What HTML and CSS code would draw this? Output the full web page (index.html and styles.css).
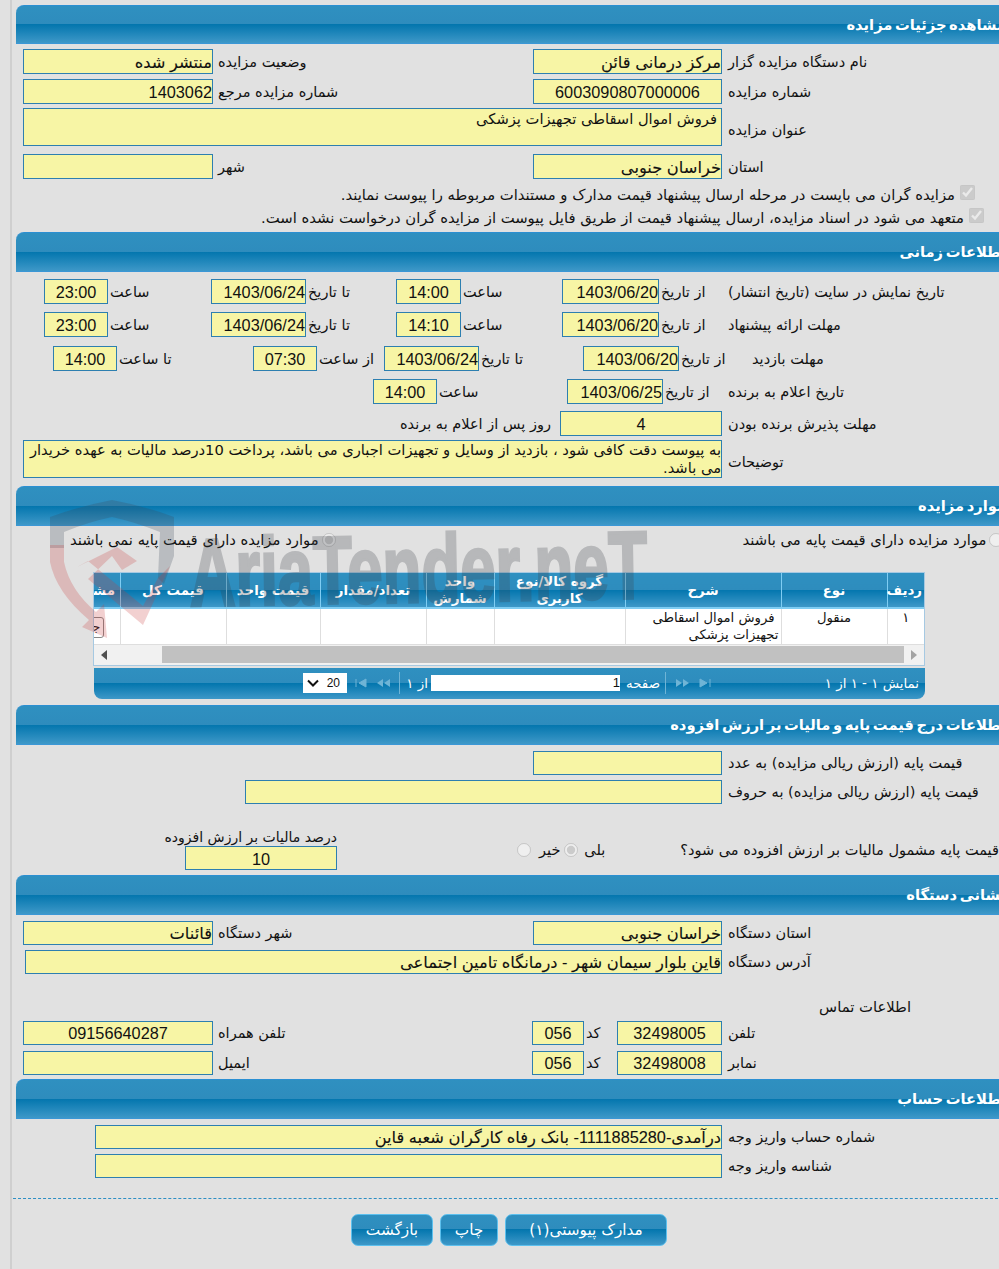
FILE: index.html
```html
<!DOCTYPE html>
<html lang="fa">
<head>
<meta charset="utf-8">
<title>مشاهده جزئیات مزایده</title>
<link rel="stylesheet" href="styles.css">
</head>
<body>
<div class="page">
  <div class="wrap">

    <h2 class="hd first">مشاهده جزئیات مزایده</h2>
    <div class="row c-main h25 mt5 low">
      <div class="in big ra">منتشر شده</div><div class="lb">وضعیت مزایده</div>
      <div class="in big ra">مرکز درمانی قائن</div><div class="lb">نام دستگاه مزایده گزار</div>
    </div>
    <div class="row c-main h24 mt5 low">
      <div class="in ra">1403062</div><div class="lb">شماره مزایده مرجع</div>
      <div class="in ce">6003090807000006</div><div class="lb">شماره مزایده</div>
    </div>
    <div class="row c-wide h38 mt5">
      <div class="in area">فروش اموال اسقاطی تجهیزات پزشکی</div><div class="lb">عنوان مزایده</div>
    </div>
    <div class="row c-main h25 mt8 low">
      <div class="in"></div><div class="lb">شهر</div>
      <div class="in big ra">خراسان جنوبی</div><div class="lb">استان</div>
    </div>
    <label class="chk mt4"><input type="checkbox" checked disabled><span>مزایده گران می بایست در مرحله ارسال پیشنهاد قیمت مدارک و مستندات مربوطه را پیوست نمایند.</span></label>
    <label class="chk"><input type="checkbox" checked disabled><span>متعهد می شود در اسناد مزایده، ارسال پیشنهاد قیمت از طریق فایل پیوست از مزایده گران درخواست نشده است.</span></label>

    <h2 class="hd mt3">اطلاعات زمانی</h2>
    <div class="row c-time h24 mt7 low">
      <div class="in ce">23:00</div><div class="lb s">ساعت</div>
      <div class="in ra">1403/06/24</div><div class="lb s">تا تاریخ</div>
      <div class="in ce">14:00</div><div class="lb s">ساعت</div>
      <div class="in ra">1403/06/20</div><div class="lb s">از تاریخ</div>
      <div class="lb">تاریخ نمایش در سایت (تاریخ انتشار)</div>
    </div>
    <div class="row c-time h25 mt9 low">
      <div class="in ce">23:00</div><div class="lb s">ساعت</div>
      <div class="in ra">1403/06/24</div><div class="lb s">تا تاریخ</div>
      <div class="in ce">14:10</div><div class="lb s">ساعت</div>
      <div class="in ra">1403/06/20</div><div class="lb s">از تاریخ</div>
      <div class="lb">مهلت ارائه پیشنهاد</div>
    </div>
    <div class="row c-visit h24 mt9 low">
      <div class="in ce">14:00</div><div class="lb s">تا ساعت</div>
      <div class="in ce">07:30</div><div class="lb s">از ساعت</div>
      <div class="in ra">1403/06/24</div><div class="lb s">تا تاریخ</div>
      <div class="in ra">1403/06/20</div><div class="lb s">از تاریخ</div>
      <div class="lb">مهلت بازدید</div>
    </div>
    <div class="row c-ann h25 mt9 low">
      <div class="in ce">14:00</div><div class="lb s">ساعت</div>
      <div class="in ra">1403/06/25</div><div class="lb s">از تاریخ</div>
      <div class="lb">تاریخ اعلام به برنده</div>
    </div>
    <div class="row c-days h24 mt7 low">
      <div class="lb end">روز پس از اعلام به برنده</div>
      <div class="in ce">4</div><div class="lb">مهلت پذیرش برنده بودن</div>
    </div>
    <div class="row c-wide h38 mt5">
      <div class="in area tight">به پیوست دقت کافی شود ، بازدید از وسایل و تجهیزات اجباری می باشد، پرداخت 10درصد مالیات به عهده خریدار می باشد.</div><div class="lb">توضیحات</div>
    </div>

    <h2 class="hd mt8">موارد مزایده</h2>
    <div class="radios">
      <label class="rad r-off"><span>موارد مزایده دارای قیمت پایه نمی باشند</span><input type="radio" name="base" checked disabled></label>
      <label class="rad r-on"><span>موارد مزایده دارای قیمت پایه می باشند</span><input type="radio" name="base" disabled></label>
    </div>

    <div class="grid">
      <div class="scroller">
        <table>
          <thead>
            <tr>
              <th class="w1">ردیف</th><th class="w2">نوع</th><th class="w3">شرح</th><th class="w4">گروه کالا/نوع کاربری</th>
              <th class="w5">واحد شمارش</th><th class="w6">تعداد/مقدار</th><th class="w7">قیمت واحد</th><th class="w8">قیمت کل</th><th class="w9">مشاهده</th>
            </tr>
          </thead>
          <tbody>
            <tr>
              <td class="ctr">۱</td><td class="ctr">منقول</td><td><span class="ind">فروش اموال اسقاطی</span><br>تجهیزات پزشکی</td><td></td><td></td><td></td><td></td><td></td>
              <td><span class="mini">جزئیات</span></td>
            </tr>
          </tbody>
        </table>
      </div>
      <div class="sbar">
        <span class="sb-arrow"><svg width="6" height="10" viewBox="0 0 6 10"><path d="M6 0v10L0 5z" fill="#505050"/></svg></span>
        <span class="sb-thumb"></span>
        <span class="sb-arrow"><svg width="6" height="10" viewBox="0 0 6 10"><path d="M0 0v10l6-5z" fill="#a3a3a3"/></svg></span>
      </div>
    </div>
    <div class="pager">
      <span class="pg-sel">20<svg width="12" height="8" viewBox="0 0 12 8"><path d="M1 1.5l5 5 5-5" fill="none" stroke="#111" stroke-width="2"/></svg></span>
      <span class="pg-nav first-nav">
        <svg width="12" height="10" viewBox="0 0 12 10"><path d="M1 1v8M11 1v8L4 5z" stroke="#6fb4d6" fill="#6fb4d6"/></svg>
        <svg width="15" height="10" viewBox="0 0 15 10"><path d="M7 1v8L1 5zM14 1v8L8 5z" fill="#6fb4d6"/></svg>
      </span>
      <span class="pg-sep"></span>
      <span class="pg-txt of">از ۱</span>
      <span class="pg-input">1</span>
      <span class="pg-txt page-w">صفحه</span>
      <span class="pg-sep"></span>
      <span class="pg-nav last-nav">
        <svg width="15" height="10" viewBox="0 0 15 10"><path d="M1 1v8l6-4zM8 1v8l6-4z" fill="#6fb4d6"/></svg>
        <svg width="12" height="10" viewBox="0 0 12 10"><path d="M11 1v8M1 1v8l7-4z" stroke="#6fb4d6" fill="#6fb4d6"/></svg>
      </span>
      <span class="pg-txt count">نمایش ۱ - ۱ از ۱</span>
    </div>

    <h2 class="hd mt6">اطلاعات درج قیمت پایه و مالیات بر ارزش افزوده</h2>
    <div class="row c-one h24 mt6">
      <div class="in"></div><div class="lb">قیمت پایه (ارزش ریالی مزایده) به عدد</div>
    </div>
    <div class="row c-words h24 mt5">
      <div class="in"></div><div class="lb">قیمت پایه (ارزش ریالی مزایده) به حروف</div>
    </div>
    <div class="vat">
      <div class="vat-pct">
        <div class="vat-cap">درصد مالیات بر ارزش افزوده</div>
        <div class="in ce vat-in">10</div>
      </div>
      <label class="vat-radio no"><input type="radio" name="vat" disabled><span>خیر</span></label>
      <label class="vat-radio yes"><input type="radio" name="vat" checked disabled><span>بلی</span></label>
      <div class="vat-q">قیمت پایه مشمول مالیات بر ارزش افزوده می شود؟</div>
    </div>

    <h2 class="hd mt5">نشانی دستگاه</h2>
    <div class="row c-main h24 mt6">
      <div class="in big ra">قائنات</div><div class="lb">شهر دستگاه</div>
      <div class="in big ra">خراسان جنوبی</div><div class="lb">استان دستگاه</div>
    </div>
    <div class="row c-addr h24 mt5">
      <div class="in big ra">قاین بلوار سیمان شهر - درمانگاه تامین اجتماعی</div><div class="lb">آدرس دستگاه</div>
    </div>
    <div class="contact">اطلاعات تماس</div>
    <div class="row c-phone h24">
      <div class="in ce">09156640287</div><div class="lb">تلفن همراه</div>
      <div class="in ce">056</div><div class="lb s">کد</div>
      <div class="in ce">32498005</div><div class="lb">تلفن</div>
    </div>
    <div class="row c-phone h24 mt6">
      <div class="in"></div><div class="lb">ایمیل</div>
      <div class="in ce">056</div><div class="lb s">کد</div>
      <div class="in ce">32498008</div><div class="lb">نمابر</div>
    </div>

    <h2 class="hd mt4">اطلاعات حساب</h2>
    <div class="row c-acct h24 mt6">
      <div class="in big ra">درآمدی-1111885280- بانک رفاه کارگران شعبه قاین</div><div class="lb">شماره حساب واریز وجه</div>
    </div>
    <div class="row c-acct h24 mt5">
      <div class="in"></div><div class="lb">شناسه واریز وجه</div>
    </div>
  </div>

  <div class="rule"></div>
  <div class="actions">
    <a class="btn b-back">بازگشت</a>
    <a class="btn b-print">چاپ</a>
    <a class="btn b-docs">مدارک پیوستی(۱)</a>
  </div>
</div>

<svg class="mark" width="660" height="160" viewBox="40 490 660 160">
  <path d="M50 517Q80 506 112 500Q145 506 174 517V556L164 584L158 578L160 532Q135 522 112 517Q88 522 64 532V548H50Z" fill="#3c4658" fill-opacity=".24"/>
  <path d="M50 545H64V562Q70 590 96 612L104 604L107 638L82 627L89 620Q56 592 50 562Z" fill="#c83c3c" fill-opacity=".24"/>
  <path d="M77 567L117 547L137 561L122 570L112 556L88 579L143 625L170 566L158 578L143 606L88 561Z" fill="#c83c3c" fill-opacity=".24"/>
  <text x="190" y="606" class="mark-t" textLength="458" lengthAdjust="spacingAndGlyphs" transform="rotate(-1 190 606)">AriaTender.neT</text>
</svg>
</body>
</html>
```

FILE: styles.css
```css
* { box-sizing: border-box; }
html, body { margin: 0; padding: 0; }
body {
  width: 999px;
  height: 1269px;
  overflow: hidden;
  position: relative;
  background: #e1e1e1;
  font-family: "DejaVu Sans", sans-serif;
  font-size: 14.5px;
  color: #111;
}
.page {
  margin-left: 10px;
  width: 989px;
  height: 1269px;
  border-left: 2px solid #cfcfcf;
  padding-top: 5px;
}
.wrap { margin-left: 4px; width: 990px; }

.hd {
  margin: 0;
  height: 40px;
  line-height: 38px;
  direction: rtl;
  color: #fff;
  font-size: 14.7px;
  font-weight: bold;
  word-spacing: -2.5px;
  white-space: nowrap;
  border-top: 1px solid #2b8fd2;
  border-bottom: 1px solid #3b97d6;
  border-radius: 8px 0 0 0;
  background: linear-gradient(#2f90c0 0, #2e8cbd 50%, #0376ae 50%, #3e98c8 100%);
}
.first { height: 39px; }

.mt3 { margin-top: 3px; } .mt4 { margin-top: 4px; } .mt5 { margin-top: 5px; } .mt6 { margin-top: 6px; }
.mt7 { margin-top: 7px; } .mt8 { margin-top: 8px; } .mt9 { margin-top: 9px; }
.h24 { height: 24px; } .h25 { height: 25px; } .h38 { height: 38px; }

.row { display: grid; align-items: stretch; }
.c-main { padding-left: 7px; grid-template-columns: 190px 320px 189px 1fr; }
.c-wide { padding-left: 7px; grid-template-columns: 699px 1fr; }
.c-time { padding-left: 28px; grid-template-columns: 64px 103px 95px 90px 65px 101px 97px 69px 1fr; }
.c-visit { padding-left: 37px; grid-template-columns: 64px 136px 64px 67px 95px 104px 96px 49px 1fr; }
.c-ann { padding-left: 357px; grid-template-columns: 64px 130px 96px 65px 1fr; }
.c-days { grid-template-columns: 544px 162px 1fr; }
.c-one { padding-left: 517px; grid-template-columns: 189px 1fr; }
.c-words { padding-left: 229px; grid-template-columns: 477px 1fr; }
.c-addr { padding-left: 9px; grid-template-columns: 697px 1fr; }
.c-phone { padding-left: 7px; grid-template-columns: 190px 319px 52px 33px 105px 1fr; }
.c-acct { padding-left: 79px; grid-template-columns: 627px 1fr; }

.in {
  border: 1px solid #2d7fb0;
  background: #f7f5a5;
  direction: rtl;
  font-family: "Liberation Sans", "DejaVu Sans", sans-serif;
  font-size: 16.3px;
  line-height: 22px;
  white-space: nowrap;
  overflow: hidden;
  color: #111;
}
.ra { text-align: right; }
.ce { text-align: center; }
.big { -webkit-text-stroke: .1px #111; }
.low .in { line-height: 24px; }
.low .lb { padding-top: 1px; }
.area {
  font-family: "DejaVu Sans", sans-serif;
  font-size: 14.7px;
  line-height: 18px;
  white-space: normal;
  padding-right: 4px;
  padding-top: 1px;
}
.tight { padding-right: 0; padding-top: 0; }

.lb {
  direction: rtl;
  text-align: left;
  padding-left: 5px;
  line-height: 24px;
  white-space: nowrap;
}
.lb.s { padding-left: 2px; }
.c-main .lb:last-child, .c-wide .lb, .c-days .lb:last-child, .c-one .lb, .c-words .lb,
.c-addr .lb, .c-phone .lb:last-child, .c-acct .lb { padding-left: 6px; }
.c-time .lb:last-child, .c-ann .lb:last-child { padding-left: 0; }
.c-visit .lb:last-child { padding-left: 24px; }
.lb.end { text-align: right; padding: 1px 9px 0 0; }
.c-wide .lb { padding-top: 10px; }

.chk {
  display: flex;
  direction: rtl;
  height: 23px;
  align-items: center;
  padding-right: 31px;
  gap: 5px;
  white-space: nowrap;
  font-size: 14.8px;
}
.chk input { width: 15px; height: 15px; margin: -5px 0 0 0; flex: none; }
.chk + .chk { padding-right: 22px; }

.radios { height: 47px; margin-bottom: -1px; display: flex; direction: ltr; font-size: 14.8px; }
.rad { display: flex; align-items: center; height: 27px; gap: 3px; white-space: nowrap; }
.rad span { direction: rtl; }
.rad input { margin: 0; flex: none; width: 14px; height: 14px; }
.r-off { margin-left: 54px; }
.r-on { margin-left: 407px; }

.grid {
  margin-left: 77px;
  width: 832px;
  border: 1px solid #a6c9e2;
  background: #f1f1f1;
}
.scroller { overflow: hidden; direction: rtl; }
table {
  border-collapse: collapse;
  table-layout: fixed;
  width: 866px;
  direction: rtl;
  background: #fff;
}
th {
  height: 35px;
  padding: 0 2px;
  color: #fff;
  font-size: 13.4px;
  line-height: 17px;
  font-weight: bold;
  border-left: 1px solid #7fcdf3;
  border-bottom: 2px solid #7fcdf3;
  background: linear-gradient(#2f90c0 0, #2e8cbd 50%, #0376ae 50%, #3e98c8 100%);
}
td {
  height: 36px;
  padding: 0 2px;
  font-size: 13.2px;
  line-height: 17px;
  border-left: 1px solid #dedede;
  border-bottom: 1px solid #dedede;
  vertical-align: top;
  white-space: nowrap;
}
.ctr { text-align: center; }
.ind { padding-right: 4px; }
.w1 { width: 37px; } .w2 { width: 106px; } .w3 { width: 156px; } .w4 { width: 131px; } .w5 { width: 68px; }
.w6 { width: 106px; } .w7 { width: 94px; } .w8 { width: 106px; } .w9 { width: 62px; }
.mini {
  display: block;
  margin: 8px 14px 0 0;
  width: 54px;
  height: 21px;
  border: 1px solid #888;
  border-radius: 3px;
  text-align: right;
  padding-right: 2px;
}
.sbar { height: 20px; display: flex; align-items: center; background: #f1f1f1; }
.sb-arrow { width: 20px; height: 17px; display: flex; align-items: center; justify-content: center; flex: none; }
.sb-arrow:first-child { width: 68px; justify-content: flex-start; padding-left: 7px; }
.sb-thumb { flex: 1; height: 17px; background: #c1c1c1; }

.pager {
  margin-top: 2px;
  margin-left: 78px;
  width: 831px;
  height: 31px;
  display: flex;
  align-items: center;
  border-radius: 0 0 8px 8px;
  color: #fff;
  background: linear-gradient(#2f90c0 0, #2e8cbd 50%, #0376ae 50%, #3e98c8 100%);
}
.pg-sel {
  margin-left: 209px;
  width: 44px;
  height: 20px;
  background: #fff;
  color: #111;
  display: flex;
  flex-direction: row-reverse;
  justify-content: space-between;
  align-items: center;
  font: 12px "Liberation Sans", sans-serif;
  padding: 0 7px 0 4px;
  flex: none;
}
.pg-nav { display: flex; align-items: center; gap: 9px; flex: none; }
.first-nav { margin-left: 8px; }
.pg-sep { width: 1px; height: 22px; background: #6fb4d6; flex: none; }
.pg-txt { direction: rtl; font-size: 13.4px; white-space: nowrap; flex: none; }
.first-nav + .pg-sep { margin-left: 8px; }
.of { margin-left: 6px; width: 22px; }
.pg-input {
  margin-left: 3px;
  width: 189px;
  height: 16px;
  background: #fff;
  color: #111;
  text-align: right;
  font: 13px/16px "Liberation Sans", sans-serif;
  flex: none;
}
.page-w { margin-left: 3px; width: 37px; }
.page-w + .pg-sep { margin-left: 5px; }
.last-nav { margin-left: 9px; }
.count { margin-left: auto; margin-right: 6px; }

.vat { height: 66px; display: flex; direction: ltr; }
.vat-pct { width: 321px; position: relative; padding-top: 42px; }
.vat-cap { direction: rtl; font-size: 14px; line-height: 18px; position: absolute; right: 0; top: 24px; white-space: nowrap; }
.vat-in { width: 152px; height: 24px; margin-left: 169px; line-height: 25px; }
.vat-radio { display: flex; align-items: center; height: 24px; margin-top: 34px; direction: ltr; white-space: nowrap; }
.vat-radio input { margin: 0; width: 14px; height: 14px; }
.no { margin-left: 180px; gap: 8px; }
.yes { margin-left: 4px; gap: 6px; }
.vat-q { direction: rtl; margin-left: 75px; margin-top: 34px; line-height: 24px; white-space: nowrap; }

.contact { direction: rtl; height: 47px; padding: 23px 95px 0 0; line-height: 20px; font-size: 14.8px; }

.rule { margin-left: 1px; margin-top: 20px; border-top: 1px dashed #2e8fc4; width: 990px; }
.actions { margin-top: 15px; padding-left: 339px; display: flex; gap: 7px; }
.btn {
  height: 32px;
  line-height: 31px;
  text-align: center;
  color: #fff;
  font-size: 15.3px;
  direction: rtl;
  border: 1px solid #5cc0ee;
  border-radius: 7px;
  background: linear-gradient(#2f90c0 0, #2e8cbd 48%, #0376ae 48%, #3e98c8 100%);
}
.b-back { width: 82px; } .b-print { width: 58px; } .b-docs { width: 162px; }

.mark { position: absolute; left: 40px; top: 490px; pointer-events: none; }
.mark-t {
  font: bold 96px "Liberation Sans", sans-serif;
  fill: #3c4048;
  stroke: #3c4048;
  stroke-width: 3px;
  opacity: .25;
}
```
